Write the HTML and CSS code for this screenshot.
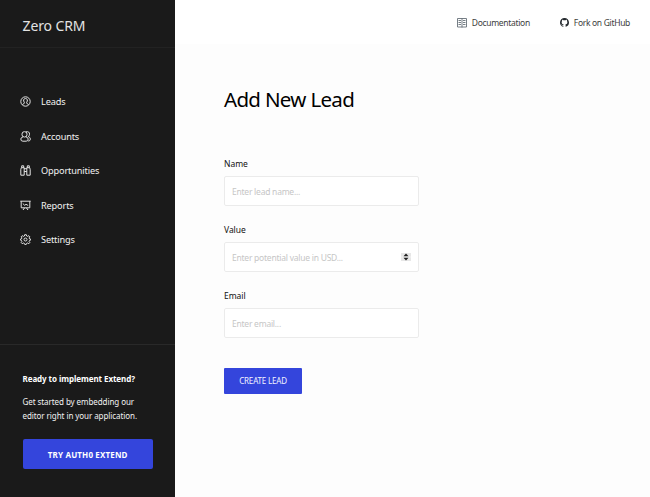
FILE: index.html
```html
<!DOCTYPE html>
<html lang="en">
<head>
<meta charset="utf-8">
<title>Zero CRM</title>
<link rel="stylesheet" href="styles.css">
</head>
<body>
<div class="app">
  <aside class="sidebar">
    <div class="brand">Zero CRM</div>
    <nav class="menu">
      <a class="menu-item"><svg class="icon" viewBox="0 0 11 11"><circle cx="5.5" cy="5.5" r="4.7"/><path d="M4.300 6.300C3.100 4.700 3.400 2.500 5.500 2.500s2.400 2.200 1.200 3.800v1L8.500 8.500M4.300 6.300v1L2.500 8.500"/></svg><span>Leads</span></a>
      <a class="menu-item accounts"><svg class="icon" viewBox="0 0 11 11"><rect x="2" y=".7" width="5" height="5.300" rx="2.300"/><path d="M3.200 5.800Q.8 6.500.8 8q0 2.200 2 2.200h3.400q2 0 2-2.200 0-1.500-2.400-2.200M5.800.9C8.500.2 9.700 1.400 9.500 3.200 9.400 4.500 9 5.300 8.200 5.600c1.500.5 2.100 1.200 2.100 2.400 0 1.400-.7 2-2.100 2"/></svg><span>Accounts</span></a>
      <a class="menu-item opportunities"><svg class="icon" viewBox="0 0 11 11"><path d="M1.700 2.700V.8h2v1.900M7.300 2.700V.8h2v1.900M1.300 2.700.8 4.500v5.700h3.400V2.700zM9.700 2.700l.5 1.800v5.700H6.800V2.700zM4.200 3.700h2.600M4.200 6.500h2.600"/></svg><span>Opportunities</span></a>
      <a class="menu-item reports"><svg class="icon" viewBox="0 0 11 11"><path d="M.3 1.200h10.400M1.200 1.200v6.600h8.600V1.200M2.800 3.500l1.900 1.800 1.300-1 2.200 1.200M4.500 8 3 10M6.500 8 8 10"/></svg><span>Reports</span></a>
      <a class="menu-item settings"><svg class="icon" viewBox="0 0 11 11"><path d="M4.700.7h1.600l.3 1.300 1 .4 1.200-.7 1 1.100-.7 1.100.4 1 1.200.2v1l-1.200.4-.4 1 .7 1.100-1 1.100-1.200-.7-1 .4-.3 1H4.700L4.400 9.400l-1-.4-1.200.7-1-1.100.7-1.100-.4-1L.4 6.100v-1l1.100-.2.4-1-.7-1.100 1-1.100 1.200.7 1-.4z"/><circle cx="5.500" cy="5.500" r="1.500"/></svg><span>Settings</span></a>
    </nav>
    <section class="promo">
      <h2>Ready to implement Extend?</h2>
      <p><span>Get started by embedding our</span><br><span>editor right in your application.</span></p>
      <a class="promo-button"><span>TRY AUTH0 EXTEND</span></a>
    </section>
  </aside>
  <div class="page">
    <header class="topbar">
      <a class="top-link"><svg class="doc-icon" viewBox="0 0 10 10"><path d="M.5.500h9v8.500h-9zM5 .5v9M1.500 2.500H4M1.500 4.500H4M1.500 6.500H4M6 2.500h2.500M6 4.500h2.500M6 6.500h2.500"/></svg><span>Documentation</span></a>
      <a class="top-link github"><svg class="git-icon" viewBox="0 0 16 16"><path d="M8 0C3.580 0 0 3.580 0 8c0 3.540 2.290 6.530 5.470 7.590.4.070.55-.17.55-.38 0-.19-.01-.82-.01-1.490-2.010.37-2.530-.49-2.690-.94-.09-.23-.48-.94-.82-1.130-.28-.15-.68-.52-.01-.53.63-.01 1.080.58 1.230.82.72 1.210 1.870.87 2.330.66.07-.52.28-.87.51-1.070-1.780-.2-3.640-.89-3.640-3.950 0-.87.31-1.590.82-2.150-.08-.2-.36-1.020.08-2.120 0 0 .67-.21 2.200.82.64-.18 1.320-.27 2-.27s1.360.09 2 .27c1.530-1.040 2.200-.82 2.200-.82.44 1.100.16 1.920.08 2.120.51.56.82 1.270.82 2.150 0 3.070-1.870 3.750-3.650 3.950.29.25.54.73.54 1.480 0 1.070-.01 1.930-.01 2.200 0 .21.150.46.55.38A8.010 8.010 0 0 0 16 8c0-4.420-3.580-8-8-8z"/></svg><span>Fork on GitHub</span></a>
    </header>
    <main class="content">
      <h1>Add New Lead</h1>
      <form>
        <div class="field">
          <label for="name">Name</label>
          <input id="name" type="text" placeholder="Enter lead name...">
        </div>
        <div class="field">
          <label for="value">Value</label>
          <div class="number-box">
            <input id="value" type="text" inputmode="decimal" placeholder="Enter potential value in USD...">
            <svg class="stepper" viewBox="0 0 10 8"><path class="stepper-bg" d="M0 0h10v3.700H0zM0 4.300h10V8H0z"/><path d="M5 .5 7.500 3.200h-5zM5 7.500 2.500 4.800h5z"/></svg>
          </div>
        </div>
        <div class="field">
          <label for="email">Email</label>
          <input id="email" type="email" placeholder="Enter email...">
        </div>
        <button class="create" type="button"><span>CREATE LEAD</span></button>
      </form>
    </main>
  </div>
</div>
</body>
</html>
```
FILE: styles.css
```css
* { box-sizing: border-box; }
body {
  margin: 0;
  font-family: "Noto Sans", "Open Sans", sans-serif;
  background: #fdfdfd;
  overflow: hidden;
}
.app { display: flex; height: 497px; }
.sidebar {
  width: 175px;
  flex: none;
  display: flex;
  flex-direction: column;
  background: #1a1a1a;
  color: #f2f2f2;
}
.brand {
  height: 48px;
  padding: 2px 0 0 22.500px;
  border-bottom: 1px solid #222;
  font-size: 14px;
  line-height: 48px;
  letter-spacing: -.12px;
  color: #e3e3e3;
}
.menu { flex: 1; padding-top: 36.200px; font-size: 9.200px; letter-spacing: -.15px; }
.menu-item {
  display: flex;
  align-items: center;
  height: 34.600px;
  padding-left: 19.500px;
  gap: 10.500px;
  white-space: nowrap;
}
.icon { width: 11px; height: 11px; fill: none; stroke: #e4e4e4; stroke-width: 1; }
.promo {
  height: 153px;
  border-top: 1px solid #292929;
  padding: 27px 22px 0 22.500px;
  font-size: 8px;
  letter-spacing: -.07px;
  white-space: nowrap;
}
.promo h2 { margin: 0; font-size: 8px; line-height: 14px; font-weight: 700; color: #fff; }
.promo p { margin: 9px 0 15px; line-height: 14.300px; }
.promo-button {
  display: block;
  height: 30px;
  border-radius: 2px;
  background: #3445dc;
  color: #fff;
  font-size: 8px;
  font-weight: 700;
  line-height: 31px;
  letter-spacing: .16px;
  text-align: center;
}
.page { flex: 1; }
.topbar {
  display: flex;
  justify-content: flex-end;
  align-items: center;
  height: 44px;
  padding: 1px 20px 0 0;
  background: #fff;
  color: #3d3d3d;
  font-size: 8.500px;
  letter-spacing: -.32px;
}
.top-link { display: flex; align-items: center; white-space: nowrap; gap: 5px; }
.github { margin-left: 30px; }
.doc-icon { width: 10px; height: 10px; fill: none; stroke: #667078; stroke-width: .9; }
.git-icon { width: 9px; height: 9px; fill: #24292e; }
.content { padding: 40px 0 0 49px; }
h1 {
  margin: 0 0 42px;
  font-size: 20.500px;
  line-height: 30px;
  font-weight: 400;
  letter-spacing: -.68px;
  color: #000;
}
.field { width: 195px; height: 66.200px; }
label { display: block; height: 20px; font-size: 8.500px; line-height: 15px; letter-spacing: -.04px; color: #111; }
input {
  display: block;
  width: 195px;
  height: 30px;
  padding: 0 7px;
  border: 1px solid #ebebeb;
  border-radius: 2px;
  background: #fff;
  font: 8.500px "Noto Sans", sans-serif;
  letter-spacing: -.24px;
}
input::placeholder { color: #c6c6c6; opacity: 1; }
.number-box { display: flex; align-items: center; }
.stepper { width: 10px; height: 8px; margin-left: -18px; fill: #222; }
.stepper-bg { fill: #e7e7e7; }
.create {
  display: block;
  width: 78px;
  height: 26px;
  margin-top: 13px;
  padding: 0;
  border: 0;
  border-radius: 1px;
  background: #3445dc;
  color: #f2f2ff;
  font: 8px "Noto Sans", sans-serif;
  letter-spacing: -.18px;
}
```
